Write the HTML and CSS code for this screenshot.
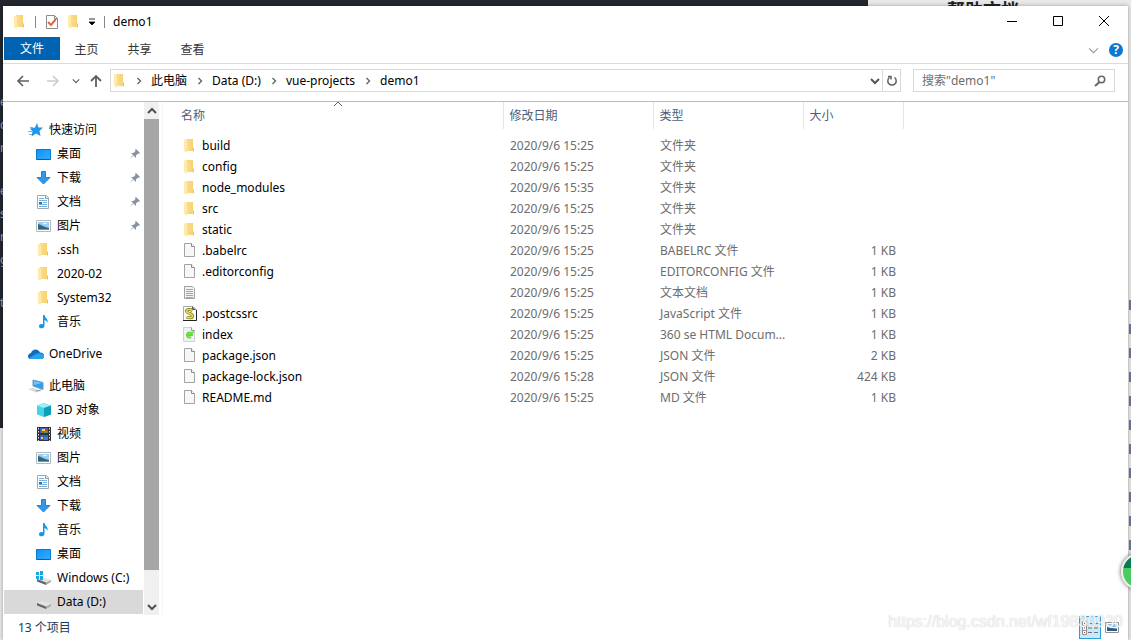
FILE: index.html
```html
<!DOCTYPE html>
<html lang="zh-CN">
<head>
<meta charset="utf-8">
<title>demo1</title>
<link rel="stylesheet" href="styles.css">
</head>
<body>
<svg class="sprite" aria-hidden="true">
  <defs>
    <linearGradient id="gFolder"><stop offset="0" stop-color="#fbdf93"/><stop offset="1" stop-color="#f5d06c"/></linearGradient>
    <linearGradient id="gBlue" x2="1" y2="1"><stop offset="0" stop-color="#1590f4"/><stop offset="1" stop-color="#2fb0ff"/></linearGradient>
  </defs>
  <symbol id="folder" viewBox="0 0 16 16"><path d="M4 1h7v8l1 1v3H4z" fill="url(#gFolder)"/><path d="M2 1l3 2v12l-3-2z" fill="#ffe9ad"/><path d="M11 9.500l1 1v3h-1z" fill="#eec35a"/></symbol>
  <symbol id="file" viewBox="0 0 16 16"><path d="M2.500 .5h7l3 3v10h-10z" fill="#f7f7f7" stroke="#a3a3a3"/><path d="M9.500 .5v3h3" fill="#fff" stroke="#8a8a8a"/></symbol>
  <symbol id="text" viewBox="0 0 16 16"><path d="M2.500 1.500h8l2 2v10h-10z" fill="#f2f2f2" stroke="#a3a3a3"/><path d="M4 4.500h7M4 6.500h7M4 8.500h7M4 10.500h7M4 12.500h7" stroke="#a6a6a6"/></symbol>
  <symbol id="script" viewBox="0 0 16 16"><path d="M1.500 .5h9l4 3v11h-13z" fill="#fafafa" stroke="#aaa"/><path d="M14.500 4v10.500H1" fill="none" stroke="#222"/><path d="M10.500 .5v3h3" fill="#888" stroke="#555"/><path d="M10.500 4.500C8 2.500 4 3.500 4.500 5.500s6 2 6 4.500-4 2-6 1" fill="none" stroke="#77731c" stroke-width="3"/><path d="M10.500 4.500C8 2.500 4 3.500 4.500 5.500s6 2 6 4.500-4 2-6 1" fill="none" stroke="#e8df62" stroke-width="1.500"/></symbol>
  <symbol id="html" viewBox="0 0 16 16"><path d="M1.500 .5h8l3 3v11h-11z" fill="#f0f3f0" stroke="#ccd2cc"/><path d="M9.500 .5v3h3" fill="#fff" stroke="#999"/><path d="M5 8h5A2.500 2.500 0 1 0 9 10" fill="none" stroke="#5fdc3c" stroke-width="2"/><path d="M9 5l3-1-1 3" fill="#5fdc3c"/></symbol>
  <symbol id="star" viewBox="0 0 16 16"><path d="M9 1l1.500 4.500h4.500L11.500 9l1 5L8 11.500 3.500 14.500l1-5L2 6.500l5-1z" fill="#2196eb"/><path d="M2 5.500h3M0 9.500h4M1 12.500h3" stroke="#61b8f5"/></symbol>
  <symbol id="desktop" viewBox="0 0 16 16"><path d="M.5 3.500h14v10H.5z" fill="url(#gBlue)" stroke="#087ad0"/><path d="M1 13.500h13" stroke="#075fa8"/></symbol>
  <symbol id="download" viewBox="0 0 16 16"><path d="M5.500 1.500h4v6h4.500L7.500 14 1 7.500h4.500z" fill="#3297e8" stroke="#2581cf"/></symbol>
  <symbol id="doc" viewBox="0 0 16 16"><path d="M1.500 1.500h9l2 2v11h-11z" fill="#fff" stroke="#a3abb0"/><path d="M9.500 1.500v3h3" fill="#ddd" stroke="#929ba1"/><path d="M3 4.500h5M3 6.500h8M7 8.500h4M3 10.500h8M3 12.500h8" stroke="#72b1e0"/><path d="M3 8h3v2H3z" fill="#2276b6"/></symbol>
  <symbol id="picture" viewBox="0 0 16 16"><path d="M.5 2.500h14v11H.5z" fill="#fff" stroke="#b4b9bd"/><path d="M2 4h11v8H2z" fill="#9bcdf5"/><path d="M2 6l3 1 4 2 4 1v1H2z" fill="#31677c"/><path d="M2 11h11v1H2z" fill="#5d9ac7"/><path d="M7 5h4v1H7z" fill="#e5f5ff"/></symbol>
  <symbol id="music" viewBox="0 0 16 16"><path d="M7 1h1.500c.5 3 4 3.500 3 8-.5-2-1.500-2.500-3-3v6c-.5 3-5.500 3-5.500.500 0-2.500 2.500-3 4-2z" fill="#1297ed"/></symbol>
  <symbol id="cloud" viewBox="0 0 16 16"><path d="M3 7c1-4 7-5 9-.500 3 0 4 1.500 4 3.500s-1 3-3 3H3c-4 0-4-5 0-6z" fill="#0f6cbd"/><path d="M1 12l6-3.500c3-2 9-2 9 1.500 0 2-1 3-3 3H3z" fill="#28a2ed"/></symbol>
  <symbol id="pc" viewBox="0 0 16 16"><path d="M5 2l10 2.500v7L5 8z" fill="#2e9fec" stroke="#6b9dc2"/><path d="M6 3l8 2-8 2z" fill="#6dc4fa"/><path d="M0 11l5-1 8 3-5 1.500z" fill="#d4d8dc"/><path d="M8 13l5-1" stroke="#8e969d"/></symbol>
  <symbol id="cube" viewBox="0 0 16 16"><path d="M1 3.500L8 1l7 2.500v9L8 15l-7-2.500z" fill="#44d3e8"/><path d="M1 3.500L8 1l7 2.500L8 6z" fill="#9eeef4"/><path d="M8 6l7-2.500v9L8 15z" fill="#0d9fb9"/></symbol>
  <symbol id="video" viewBox="0 0 16 16"><path d="M1 1h14v14H1z" fill="#35333a"/><path d="M2.500 2v13M13.500 2v13" stroke="#ddd" stroke-dasharray="1.500 1.500"/><path d="M4 2h8v5H4zM4 9h8v5H4z" fill="#3464bf"/><path d="M5 5l3-3 4 3v2H5z" fill="#d64a28"/><path d="M6 3h3v2H6zM5 11h2v2H5z" fill="#eed23f"/><path d="M8 11h4v3H8z" fill="#477bd9"/><path d="M8 5h3v2H8z" fill="#46a54a"/></symbol>
  <symbol id="drive" viewBox="0 0 16 16"><path d="M1 9l5-2 9 3-5 3z" fill="#e3e3e3"/><path d="M1 9l9 3.500V15L1 11.500z" fill="#666"/><path d="M10 12.500l5-2.500v2l-5 3z" fill="#aaa"/></symbol>
  <symbol id="windrive" viewBox="0 0 16 16"><use href="#drive"/><path d="M0 2h3v3H0zM4 1h3v4H4zM0 6h3v3H0zM4 6h3v4H4z" fill="#14a9e5"/></symbol>
  <symbol id="pin" viewBox="0 0 12 12"><path d="M7 1l4 4-1 1-1-.500-2 2V10L4.500 7.500 1 11l3-4L2 5h2.500l2-2L6 2z" fill="#88949f"/></symbol>
  <symbol id="check" viewBox="0 0 16 16"><path d="M2.500 1.500h8l3 3v10h-11z" fill="#fff" stroke="#8d8d8d"/><path d="M10.500 1.500v3h3" fill="none" stroke="#8d8d8d"/><path d="M4 8l3 3 5-6" fill="none" stroke="#e4663a" stroke-width="2"/></symbol>
  <symbol id="left" viewBox="0 0 14 14"><path d="M13 7H2M7 2L2 7l5 5" fill="none" stroke="currentColor" stroke-width="1.600"/></symbol>
  <symbol id="right" viewBox="0 0 14 14"><path d="M1 7h11M7 2l5 5-5 5" fill="none" stroke="currentColor" stroke-width="1.500"/></symbol>
  <symbol id="up" viewBox="0 0 14 14"><path d="M7 13V2M2 7l5-5 5 5" fill="none" stroke="currentColor" stroke-width="1.800"/></symbol>
  <symbol id="chevdown" viewBox="0 0 10 10"><path d="M1 3l4 4 4-4" fill="none" stroke="currentColor" stroke-width="var(--stroke, 1.500)"/></symbol>
  <symbol id="chevup" viewBox="0 0 10 10"><path d="M1 7l4-4 4 4" fill="none" stroke="currentColor" stroke-width="var(--stroke, 1.500)"/></symbol>
  <symbol id="chevright" viewBox="0 0 6 10"><path d="M1.500 2l3 3-3 3" fill="none" stroke="#666" stroke-width="1.400"/></symbol>
</svg>

<div class="backdrop" aria-hidden="true">
  <div class="editor"><div class="code"><span>e</span><span>c</span><span>r</span><span class="skip">e</span><span>s</span><span>r</span><span>g</span><span class="skip">t</span></div></div>
  <div class="help-title">帮助文档</div>
  <div class="page-edge"></div>
</div>

<main class="window">
  <header class="titlebar">
    <svg class="icon"><use href="#folder"/></svg>
    <i class="bar"></i>
    <button class="quick" aria-label="属性"><svg class="icon"><use href="#check"/></svg></button>
    <button class="quick" aria-label="新建文件夹"><svg class="icon"><use href="#folder"/></svg></button>
    <button class="quick more" aria-label="自定义快速访问工具栏"><svg viewBox="0 0 8 8"><path d="M1 1h6M1 4h6L4 7z" stroke="#000" stroke-width=".8"/></svg></button>
    <i class="bar"></i>
    <h1>demo1</h1>
    <div class="controls">
      <button aria-label="最小化"><svg viewBox="0 0 12 12"><path d="M1 5.500h10"/></svg></button>
      <button aria-label="最大化"><svg viewBox="0 0 12 12"><path d="M1.500 .5h9v9h-9z"/></svg></button>
      <button aria-label="关闭"><svg viewBox="0 0 12 12"><path d="M1 0l10 10M11 0L1 10"/></svg></button>
    </div>
  </header>
  <nav class="ribbon">
    <button class="active">文件</button><button>主页</button><button>共享</button><button>查看</button>
    <div class="ribbon-end">
      <button class="expand" aria-label="展开功能区"><svg><use href="#chevdown"/></svg></button>
      <button class="help" aria-label="帮助">?</button>
    </div>
  </nav>
  <div class="addressbar">
    <div class="nav-buttons">
      <button aria-label="返回"><svg><use href="#left"/></svg></button>
      <button class="off" aria-label="前进"><svg><use href="#right"/></svg></button>
      <button class="recent" aria-label="最近浏览的位置"><svg><use href="#chevdown"/></svg></button>
      <button aria-label="上移"><svg><use href="#up"/></svg></button>
    </div>
    <div class="path">
      <svg class="icon"><use href="#folder"/></svg>
      <svg class="sep"><use href="#chevright"/></svg><a href="#">此电脑</a>
      <svg class="sep"><use href="#chevright"/></svg><a href="#">Data (D:)</a>
      <svg class="sep"><use href="#chevright"/></svg><a href="#">vue-projects</a>
      <svg class="sep"><use href="#chevright"/></svg><a href="#">demo1</a>
      <button class="history" aria-label="以前的位置"><svg><use href="#chevdown"/></svg></button>
      <button class="refresh" aria-label="刷新"><svg viewBox="0 0 12 12"><path d="M3.500 2.500a4.200 4.200 0 1 0 5 0M2 1.500h3v3" fill="none" stroke="#606060" stroke-width="1.500"/></svg></button>
    </div>
    <label class="search"><input type="search" aria-label="搜索" placeholder='搜索"demo1"'><svg viewBox="0 0 12 12"><path d="M5.500 7L1 11" stroke-width="2"/><circle cx="7.500" cy="4.500" r="3.200"/></svg></label>
  </div>

  <div class="content">
    <aside>
      <ul>
        <li class="root"><svg class="icon"><use href="#star"/></svg>快速访问</li>
        <li><svg class="icon"><use href="#desktop"/></svg>桌面<svg class="pin"><use href="#pin"/></svg></li>
        <li><svg class="icon"><use href="#download"/></svg>下载<svg class="pin"><use href="#pin"/></svg></li>
        <li><svg class="icon"><use href="#doc"/></svg>文档<svg class="pin"><use href="#pin"/></svg></li>
        <li><svg class="icon"><use href="#picture"/></svg>图片<svg class="pin"><use href="#pin"/></svg></li>
        <li><svg class="icon"><use href="#folder"/></svg>.ssh</li>
        <li><svg class="icon"><use href="#folder"/></svg>2020-02</li>
        <li><svg class="icon"><use href="#folder"/></svg>System32</li>
        <li><svg class="icon"><use href="#music"/></svg>音乐</li>
      </ul>
      <ul><li class="root"><svg class="icon"><use href="#cloud"/></svg>OneDrive</li></ul>
      <ul>
        <li class="root"><svg class="icon"><use href="#pc"/></svg>此电脑</li>
        <li><svg class="icon"><use href="#cube"/></svg>3D 对象</li>
        <li><svg class="icon"><use href="#video"/></svg>视频</li>
        <li><svg class="icon"><use href="#picture"/></svg>图片</li>
        <li><svg class="icon"><use href="#doc"/></svg>文档</li>
        <li><svg class="icon"><use href="#download"/></svg>下载</li>
        <li><svg class="icon"><use href="#music"/></svg>音乐</li>
        <li><svg class="icon"><use href="#desktop"/></svg>桌面</li>
        <li><svg class="icon"><use href="#windrive"/></svg>Windows (C:)</li>
        <li class="selected"><svg class="icon"><use href="#drive"/></svg>Data (D:)</li>
      </ul>
    </aside>
    <div class="scrollbar">
      <button aria-label="向上滚动"><svg><use href="#chevup"/></svg></button>
      <div class="thumb"></div>
      <button class="down" aria-label="向下滚动"><svg><use href="#chevdown"/></svg></button>
    </div>
    <section class="files">
      <table>
        <colgroup><col class="c-name"><col class="c-date"><col class="c-type"><col class="c-size"></colgroup>
        <thead><tr><th>名称<svg class="sort"><use href="#chevup"/></svg></th><th>修改日期</th><th>类型</th><th>大小</th></tr></thead>
        <tbody>
          <tr><td><svg class="icon"><use href="#folder"/></svg>build</td><td>2020/9/6 15:25</td><td>文件夹</td><td></td></tr>
          <tr><td><svg class="icon"><use href="#folder"/></svg>config</td><td>2020/9/6 15:25</td><td>文件夹</td><td></td></tr>
          <tr><td><svg class="icon"><use href="#folder"/></svg>node_modules</td><td>2020/9/6 15:35</td><td>文件夹</td><td></td></tr>
          <tr><td><svg class="icon"><use href="#folder"/></svg>src</td><td>2020/9/6 15:25</td><td>文件夹</td><td></td></tr>
          <tr><td><svg class="icon"><use href="#folder"/></svg>static</td><td>2020/9/6 15:25</td><td>文件夹</td><td></td></tr>
          <tr><td><svg class="icon"><use href="#file"/></svg>.babelrc</td><td>2020/9/6 15:25</td><td>BABELRC 文件</td><td>1 KB</td></tr>
          <tr><td><svg class="icon"><use href="#file"/></svg>.editorconfig</td><td>2020/9/6 15:25</td><td>EDITORCONFIG 文件</td><td>1 KB</td></tr>
          <tr><td><svg class="icon"><use href="#text"/></svg></td><td>2020/9/6 15:25</td><td>文本文档</td><td>1 KB</td></tr>
          <tr><td><svg class="icon"><use href="#script"/></svg>.postcssrc</td><td>2020/9/6 15:25</td><td>JavaScript 文件</td><td>1 KB</td></tr>
          <tr><td><svg class="icon"><use href="#html"/></svg>index</td><td>2020/9/6 15:25</td><td>360 se HTML Docum...</td><td>1 KB</td></tr>
          <tr><td><svg class="icon"><use href="#file"/></svg>package.json</td><td>2020/9/6 15:25</td><td>JSON 文件</td><td>2 KB</td></tr>
          <tr><td><svg class="icon"><use href="#file"/></svg>package-lock.json</td><td>2020/9/6 15:28</td><td>JSON 文件</td><td>424 KB</td></tr>
          <tr><td><svg class="icon"><use href="#file"/></svg>README.md</td><td>2020/9/6 15:25</td><td>MD 文件</td><td>1 KB</td></tr>
        </tbody>
      </table>
    </section>
  </div>
  <footer>
    <span>13 个项目</span>
    <div class="views">
      <button class="on" aria-label="详细信息"><svg viewBox="0 0 16 16"><path d="M.5 1.500h4v13h-4zM.5 5.500h4M.5 10.500h4" fill="#fff" stroke="#8b9299"/><path d="M2 3.500h1M2 8h1M2 12.500h1" stroke="#a33"/><path d="M6 3.500h4M12 3.500h4M6 8h4M12 8h4M6 12.500h4M12 12.500h4" stroke="#69747c"/></svg></button>
      <button aria-label="大缩略图"><svg viewBox="0 0 16 16"><path d="M1.500 2.500h13v10h-13z" fill="#fff" stroke="#8b9299"/><path d="M3 4h10v3H3z" fill="#8dc2f3"/><path d="M3 7l4 1 6 .5V11H3z" fill="#34597c"/></svg></button>
    </div>
  </footer>
</main>
<div class="watermark">https://blog.csdn.net/wf19830930</div>
<div class="ball" aria-hidden="true"></div>
</body>
</html>
```
FILE: styles.css
```css
* { box-sizing: border-box; }
html, body { height: 100%; }
body {
  margin: 0;
  padding: 6px 3px 0;
  position: relative;
  overflow: hidden;
  background: #e9e9ea;
  font-family: "Noto Sans", "Noto Sans CJK SC", sans-serif;
  font-size: 12px;
  line-height: 16px;
  color: #000;
}
button { border: 0; padding: 0; background: none; font: inherit; color: inherit; display: flex; align-items: center; justify-content: center; }
a { color: inherit; text-decoration: none; }
ul { list-style: none; margin: 0; padding: 0; }
svg { display: block; flex: none; }
.sprite { position: absolute; width: 0; height: 0; }
.icon { width: 16px; height: 16px; }

.backdrop { position: absolute; inset: 0; overflow: hidden; }
.editor { position: absolute; left: 0; top: 0; width: 868px; height: 428px; background: #24262f; color: #9aa4b5; }
.code { padding-top: 94px; }
.code span { display: block; height: 23px; line-height: 16px; }
.code .skip { margin-top: 20px; }
.help-title { position: absolute; left: 947px; top: 0; font-size: 18px; line-height: 20px; font-weight: 700; color: #222; }
.page-edge {
  position: absolute; right: 0; top: 300px; width: 2px; height: 250px;
  background: repeating-linear-gradient(to bottom, #6b7898 0 10px, transparent 10px 24px);
}

.window { position: relative; height: 100%; display: flex; flex-direction: column; background: #fff; box-shadow: 0 0 4px rgba(0, 0, 0, .35); }

.titlebar { height: 31px; display: flex; align-items: center; padding-left: 9px; }
.titlebar .bar { width: 1px; height: 12px; margin: 0 8px 0 7px; background: #888; }
.titlebar h1 { margin: 0; font-size: 12px; font-weight: 400; }
.quick { margin-right: 6px; }
.quick.more { margin: 0 1px 0 0; }
.quick.more svg { width: 8px; height: 8px; }
.controls { margin-left: auto; display: flex; height: 100%; padding-right: 1px; }
.controls button { width: 46px; }
.controls svg { width: 12px; height: 12px; fill: none; stroke: #000; }

.ribbon { height: 27px; display: flex; align-items: flex-start; padding-left: 1px; border-bottom: 1px solid #dadbdc; color: #333; }
.ribbon > button { height: 25px; width: 53px; }
.ribbon > .active { width: 56px; height: 23px; background: #0063b1; color: #fff; }
.ribbon-end { margin-left: auto; display: flex; align-items: center; gap: 10px; height: 26px; padding-right: 5px; }
.expand svg { width: 11px; height: 11px; color: #999; --stroke: 1; }
.help { width: 14px; height: 14px; border-radius: 50%; background: #0b79d4; color: #fff; font-weight: 700; }

.addressbar { height: 38px; display: flex; align-items: center; padding: 0 13px 4px 13px; border-bottom: 1px solid #bcbcbc; }
.nav-buttons { display: flex; align-items: center; width: 94px; gap: 16px; color: #606060; }
.nav-buttons svg { width: 14px; height: 14px; }
.nav-buttons .off { color: #ccc; }
.nav-buttons .recent svg { width: 8px; height: 8px; }
.nav-buttons .recent { margin-right: -7px; margin-left: -4px; }
.path { flex: 1; min-width: 0; height: 23px; display: flex; align-items: center; padding-left: 1px; border: 1px solid #d9d9d9; }
.path .sep { width: 6px; height: 10px; margin: 0 9px 0 10px; }
.path .icon + .sep { margin: 0 9px 0 8px; }
.history { margin-left: auto; width: 14px; height: 100%; }
.history svg { width: 10px; height: 10px; color: #555; --stroke: 2; }
.refresh { width: 18px; height: 100%; border-left: 1px solid #d9d9d9; }
.refresh svg { width: 12px; height: 12px; }
.search { width: 202px; height: 23px; margin-left: 12px; display: flex; align-items: center; border: 1px solid #d9d9d9; padding: 0 8px; }
.search input { flex: 1; min-width: 0; border: 0; padding: 0; outline: 0; background: none; font: inherit; }
.search input::placeholder { color: #6d6d6d; opacity: 1; }
.search svg { width: 12px; height: 12px; fill: none; stroke: #666; stroke-width: 1.500; }

.content { flex: 1; min-height: 0; display: flex; }
aside { width: 141px; padding: 16px 1px 0; overflow: hidden; }
aside ul + ul { margin-top: 8px; }
aside li { height: 24px; display: flex; align-items: center; gap: 5px; padding: 0 2px 0 32px; white-space: nowrap; }
aside .root { padding-left: 24px; }
aside .selected { background: #d9d9d9; }
.pin { width: 12px; height: 12px; margin-left: auto; }
.scrollbar { width: 15px; display: flex; flex-direction: column; background: #f0f0f0; }
.scrollbar button { height: 17px; }
.scrollbar svg { width: 10px; height: 10px; color: #505050; --stroke: 2; }
.thumb { height: 88%; background: #a6a6a6; }
.scrollbar .down { margin-top: auto; }

.files { flex: 1; min-width: 0; margin-left: 3px; border-left: 1px solid #f5f5f5; }
table { table-layout: fixed; border-collapse: collapse; width: 740px; }
.c-name { width: 340px; }
.c-date, .c-type { width: 150px; }
.c-size { width: 100px; }
th { position: relative; height: 27px; padding: 0 6px; border-right: 1px solid #e5e5e5; text-align: left; font-weight: 400; color: #4c607a; }
th:first-child { padding-left: 18px; }
.sort { position: absolute; left: 50%; top: -3px; width: 10px; height: 10px; --stroke: 1; }
tbody::before { content: ""; display: block; height: 6px; }
td { height: 21px; padding: 0 7px; color: #6d6d6d; white-space: nowrap; }
td:first-child { display: flex; align-items: center; gap: 4px; padding-left: 19px; color: #000; }
td:last-child { text-align: right; }

footer { height: 25px; display: flex; align-items: center; padding: 0 5px 0 15px; color: #1e395b; }
.views { margin-left: auto; display: flex; height: 100%; }
.views button { width: 22px; height: 23px; margin-top: 1px; }
.views svg { width: 16px; height: 16px; }
.views .on { background: #cce8f6; border: 1px solid #26a0da; }

.watermark { position: absolute; right: 8px; bottom: 8px; font: 16px/20px "Liberation Sans", Arial, sans-serif; color: rgba(255, 255, 255, .85); text-shadow: 0 0 1px #bbb; }
.ball { position: absolute; right: -27px; top: 553px; width: 37px; height: 37px; border-radius: 50%; border: 2px solid #eee; background: linear-gradient(#087c50 38%, #48cc5f 38%); box-shadow: 0 0 4px #555; }
```
